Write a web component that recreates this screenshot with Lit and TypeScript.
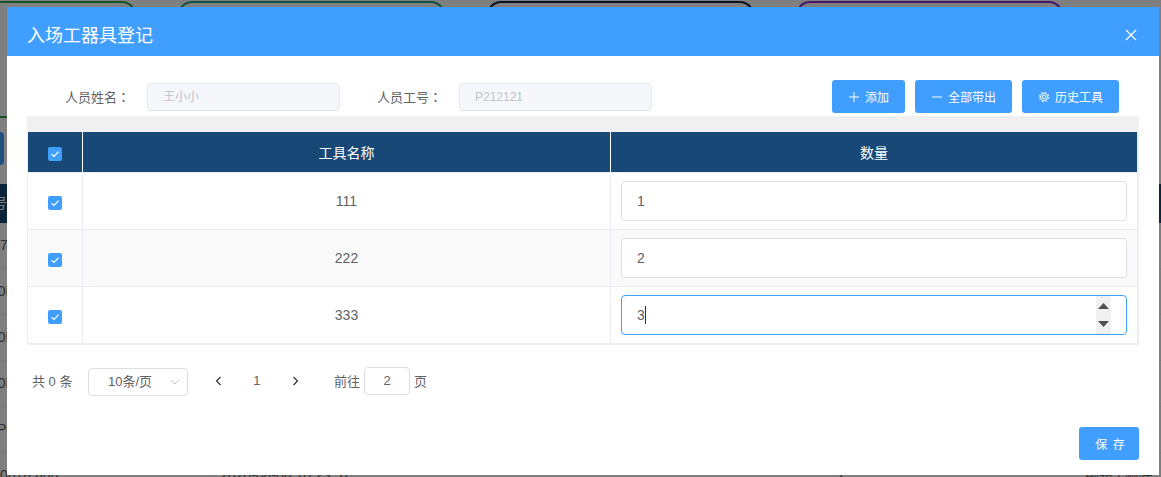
import { LitElement, html, css, svg } from "lit";
import { customElement } from "lit/decorators.js";

const check = html`<span class="cb"><svg width="14" height="14" viewBox="0 0 14 14"><path d="M3.6 7.2 L6 9.5 L10.6 4.6" fill="none" stroke="#fff" stroke-width="1.2"/></svg></span>`;

const plus = svg`<path d="M6 1 V11 M1 6 H11" stroke="#fff" stroke-width="1" fill="none"/>`;
const minus = svg`<path d="M1 6 H11" stroke="#fff" stroke-width="1" fill="none"/>`;
const gear = svg`<circle cx="6" cy="6" r="4.7" stroke="#fff" stroke-width="1" stroke-dasharray="1.85 1.85" fill="none"/><circle cx="6" cy="6" r="3.6" stroke="#fff" stroke-width="0.9" fill="none"/><circle cx="6" cy="6" r="1.7" stroke="#fff" stroke-width="0.9" fill="none"/>`;
const ico = (c: unknown) => html`<svg class="ico" width="12" height="12" viewBox="0 0 12 12">${c}</svg>`;

@customElement("app-root")
export class AppRoot extends LitElement {
  static styles = css`
    :host {
      display: block;
      position: relative;
      width: 1161px;
      height: 477px;
      overflow: hidden;
      background: #fff;
      font-family: "Liberation Sans", "Noto Sans CJK SC", sans-serif;
      color: #606266;
    }
    * { box-sizing: border-box; }

    /* page behind the dialog */
    .page { display: flex; flex-direction: column; }
    .cards { display: flex; gap: 42px; margin: 1px 0 0 -131px; }
    .card { width: 267px; height: 117px; border: 2px solid; border-radius: 14px; flex: none; }
    .c1 { border-color: #2aa84f; }
    .c2 { border-color: #22a08f; }
    .c3 { border-color: #04244f; }
    .c4 { border-color: #8a2bd0; }
    .pbtn { width: 60px; height: 33px; margin: 14px 0 0 -56px; background: #409eff; border-radius: 4px; }
    .phead { height: 39px; margin-top: 19px; background: #184875; color: #fff; font-size: 14px; line-height: 39px; }
    .phead span { display: block; margin-left: -7px; }
    .prow {
      height: 46px;
      border-bottom: 1px solid #ebeef5;
      font-size: 14px;
      line-height: 44px;
      display: grid;
      grid-template-columns: 220px 617px 248px 1fr;
      white-space: nowrap;
    }
    .prow .cut7 { margin-left: -17px; }
    .prow .cut0 { margin-left: -11.5px; }
    .prow .cutp { margin-left: -3px; }

    .mask { position: absolute; inset: 0; background: rgba(0, 0, 0, 0.5); }

    /* dialog */
    .dialog {
      position: absolute;
      left: 7px;
      top: 7px;
      width: 1152px;
      height: 468px;
      background: #fff;
      display: flex;
      flex-direction: column;
    }
    .head {
      height: 49px;
      flex: none;
      background: #409eff;
      color: #fff;
      font-size: 18px;
      padding: 4px 20px 0;
      display: flex;
      align-items: center;
      justify-content: space-between;
    }
    .head .close { display: block; margin: 3px 2px 0 0; }

    .form { display: flex; align-items: center; height: 33px; margin: 24px 40px 0 58px; font-size: 13px; }
    .form .lbl { width: 62px; white-space: nowrap; margin-right: 20px; padding-bottom: 1px; }
    .form .lbl.second { margin-left: 37px; }
    .colon { font-family: "Noto Sans CJK TC", sans-serif; }
    .dis {
      width: 193px;
      height: 28px;
      background: #f5f7fa;
      border: 1px solid #e4e7ed;
      border-radius: 4px;
      color: #c0c4cc;
      font-size: 12px;
      line-height: 26px;
      padding-left: 15px;
    }
    .actions { margin-left: auto; display: flex; gap: 10px; }
    .btn {
      height: 33px;
      padding: 0 16px;
      background: #409eff;
      border-radius: 3px;
      color: #fff;
      font-size: 12px;
      display: flex;
      align-items: center;
      gap: 5px;
      white-space: nowrap;
    }
    .ico { display: block; flex: none; }

    .tablewrap { margin: 3px 20px 0; }
    .bar { height: 16px; background: #f0f0f0; }
    .grid {
      display: grid;
      grid-template-columns: 55px 528px 526px;
      border-left: 1px solid #ebeef5;
      border-right: 2px solid #ebeef5;
      border-bottom: 2px solid #ebeef5;
      font-size: 14px;
    }
    .cell {
      display: flex;
      align-items: center;
      justify-content: center;
      border-right: 1px solid #ebeef5;
      border-bottom: 1px solid #ebeef5;
      height: 57px;
    }
    .cell.last { border-right: 0; }
    .cell.lastrow { border-bottom: 0; height: 56px; }
    .cell.alt { background: #fafafa; }
    .cell.th { height: 41px; padding-bottom: 1px; background: #184875; color: #fff; border-right: 1px solid #fff; border-bottom: 1px solid #ebeef5; }
    .cell.th.last { border-right: 0; }
    .cell.inp { padding: 0 10px; }
    .cb {
      width: 14px;
      height: 14px;
      margin-top: 4px;
      background: #409eff;
      border-radius: 2px;
      display: block;
      flex: none;
    }
    .cb svg { display: block; }
    .numbox { position: relative; width: 100%; height: 40px; }
    .num {
      display: block;
      width: 100%;
      height: 40px;
      border: 1px solid #dcdfe6;
      border-radius: 4px;
      padding: 0 15px;
      background: #fff;
      color: #606266;
      font: inherit;
      outline: none;
    }
    .num.focus { border-color: #409eff; }
    .caret { position: absolute; left: 24px; top: 11px; width: 1px; height: 18px; background: #303133; }
    .spin {
      position: absolute;
      left: 475px;
      top: 1px;
      width: 15px;
      height: 38px;
      background: #f0f0f0;
      display: flex;
      flex-direction: column;
      justify-content: space-between;
      align-items: center;
      padding: 7px 0 7px;
    }
    .spin svg { display: block; }

    .pager { display: flex; align-items: center; height: 28px; margin: 22px 0 0 25px; font-size: 13px; }
    .ptext { padding-bottom: 2px; }
    .total { width: 41px; white-space: nowrap; }
    .select {
      width: 100px;
      height: 28px;
      margin: 2px 0 0 15px;
      border: 1px solid #dcdfe6;
      border-radius: 4px;
      padding: 0 7px 0 19px;
      display: flex;
      align-items: center;
      justify-content: space-between;
    }
    .select .ptext { padding-bottom: 3px; }
    .pg { width: 38.5px; display: flex; justify-content: center; align-items: center; }
    .pgs { display: flex; margin: 0 19.5px 0 11px; }
    .jump {
      width: 46px;
      height: 28px;
      margin: 0 4px;
      border: 1px solid #dcdfe6;
      border-radius: 4px;
      text-align: center;
      line-height: 26px;
    }
    .foot { display: flex; justify-content: flex-end; margin: 32px 20px 0 0; }
    .save {
      width: 60px;
      height: 33px;
      padding-left: 3px;
      background: #409eff;
      color: #fff;
      border-radius: 3px;
      font-size: 12px;
      display: flex;
      align-items: center;
      justify-content: center;
      letter-spacing: 1px;
      white-space: pre;
    }
  `;

  render() {
    const rows = [
      { n: "111", v: "1" },
      { n: "222", v: "2" },
      { n: "333", v: "3" },
    ];
    return html`
      <div class="page">
        <div class="cards">
          <div class="card c1"></div><div class="card c2"></div><div class="card c3"></div><div class="card c4"></div>
        </div>
        <div class="pbtn"></div>
        <div class="phead"><span>号</span></div>
        <div class="prow"><span class="cut7">P07</span></div>
        <div class="prow"><span class="cut0">P0D</span></div>
        <div class="prow"><span class="cut0">P0D</span></div>
        <div class="prow"><span class="cut0">P0D</span></div>
        <div class="prow"><span class="cutp">P6</span></div>
        <div class="prow"><span>0678 8nn</span><span>2020-08-08 10:23:57</span><span>1</span><span>编辑 | 删除</span></div>
      </div>
      <div class="mask"></div>
      <div class="dialog">
        <div class="head">
          <span>入场工器具登记</span>
          <svg class="close" width="12" height="12" viewBox="0 0 12 12"><path d="M1 1 L11 11 M11 1 L1 11" stroke="#fff" stroke-width="1.2" fill="none"/></svg>
        </div>
        <div class="form">
          <span class="lbl">人员姓名<span class="colon">：</span></span>
          <div class="dis">王小小</div>
          <span class="lbl second">人员工号<span class="colon">：</span></span>
          <div class="dis">P212121</div>
          <div class="actions">
            <div class="btn">${ico(plus)}添加</div>
            <div class="btn">${ico(minus)}全部带出</div>
            <div class="btn">${ico(gear)}历史工具</div>
          </div>
        </div>
        <div class="tablewrap">
          <div class="bar"></div>
          <div class="grid">
            <div class="cell th">${check}</div>
            <div class="cell th">工具名称</div>
            <div class="cell th last">数量</div>
            ${rows.map((r, i) => {
              const alt = i === 1 ? "alt" : "";
              const lr = i === 2 ? "lastrow" : "";
              return html`
                <div class="cell ${alt} ${lr}">${check}</div>
                <div class="cell ${alt} ${lr}">${r.n}</div>
                <div class="cell inp last ${alt} ${lr}">
                  <div class="numbox">
                    <input class="num ${i === 2 ? "focus" : ""}" .value=${r.v} />
                    ${i === 2
                      ? html`<span class="caret"></span>
                          <span class="spin">
                            <svg width="11" height="6" viewBox="0 0 11 6"><path d="M5.5 0 L11 6 H0 Z" fill="#505050"/></svg>
                            <svg width="11" height="6" viewBox="0 0 11 6"><path d="M0 0 H11 L5.5 6 Z" fill="#505050"/></svg>
                          </span>`
                      : ""}
                  </div>
                </div>
              `;
            })}
          </div>
        </div>
        <div class="pager">
          <span class="total ptext">共 0 条</span>
          <div class="select">
            <span class="ptext">10条/页</span>
            <svg width="10" height="6" viewBox="0 0 10 6"><path d="M1 1 L5 5 L9 1" fill="none" stroke="#c0c4cc" stroke-width="1"/></svg>
          </div>
          <div class="pgs">
            <span class="pg"><svg width="7" height="10" viewBox="0 0 7 10"><path d="M5.5 1 L1.5 5 L5.5 9" fill="none" stroke="#303133" stroke-width="1.2"/></svg></span>
            <span class="pg ptext">1</span>
            <span class="pg"><svg width="7" height="10" viewBox="0 0 7 10"><path d="M1.5 1 L5.5 5 L1.5 9" fill="none" stroke="#303133" stroke-width="1.2"/></svg></span>
          </div>
          <span class="ptext">前往</span>
          <div class="jump">2</div>
          <span class="ptext">页</span>
        </div>
        <div class="foot"><div class="save">保 存</div></div>
      </div>
    `;
  }
}
